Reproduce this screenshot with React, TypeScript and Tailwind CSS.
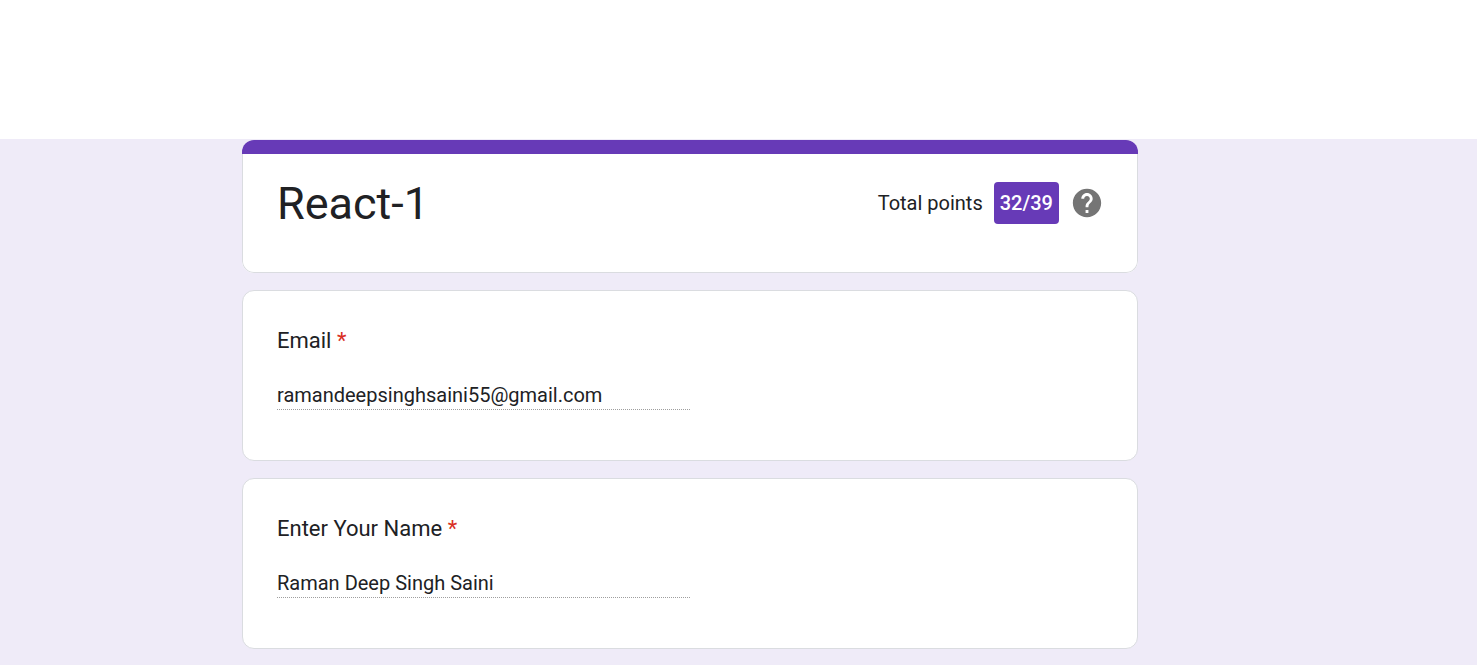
import React from "react";

type FieldCardProps = {
  id: string;
  label: string;
  type: string;
  value: string;
};

function FieldCard({ id, label, type, value }: FieldCardProps) {
  return (
    <section className="rounded-xl border border-[#dadce0] bg-white px-[34px] pt-[33px] pb-[50px]">
      <label htmlFor={id} className="block text-[22px] leading-[34px]">
        {label} <span className="text-[#d93025]">*</span>
      </label>
      <input
        id={id}
        type={type}
        defaultValue={value}
        readOnly
        className="mt-[23px] block h-[29px] w-1/2 border-b border-dotted border-[#9e9e9e] bg-transparent p-0 text-[20px] leading-[28px] outline-none"
      />
    </section>
  );
}

export default function App() {
  return (
    <div className="flex min-h-screen flex-col bg-white font-['Roboto',sans-serif] text-[#202124]">
      <div className="h-[139px] shrink-0" />
      <main className="grow bg-[#efebf8] pt-px pr-[97px] pb-4">
        <div className="mx-auto flex max-w-[896px] flex-col gap-[17px]">
          <header className="overflow-hidden rounded-xl bg-white">
            <div className="h-3.5 bg-[#673ab7]" />
            <div className="flex items-start justify-between rounded-b-xl border border-t-0 border-[#dadce0] pt-[21px] pr-[33px] pb-[39px] pl-[34px]">
              <h1 className="text-[45px] leading-[58px]">React-1</h1>
              <div className="flex h-[56px] items-center">
                <span className="text-[20px] leading-[28px]">Total points</span>
                <span className="ml-[11px] rounded bg-[#673ab7] px-1.5 py-[7px] text-[20px] leading-[28px] font-medium text-white">
                  32/39
                </span>
                <button type="button" aria-label="Help" className="ml-[11px] text-[#757575]">
                  <svg className="size-[34px]" viewBox="0 0 24 24" fill="currentColor" aria-hidden="true">
                    <path d="M12 2C6.48 2 2 6.48 2 12s4.48 10 10 10 10-4.48 10-10S17.52 2 12 2zm1 17h-2v-2h2v2zm2.07-7.75l-.9.92C13.45 12.9 13 13.5 13 15h-2v-.5c0-1.1.45-2.1 1.17-2.83l1.24-1.26c.37-.36.59-.86.59-1.41 0-1.1-.9-2-2-2s-2 .9-2 2H8c0-2.21 1.79-4 4-4s4 1.79 4 4c0 .88-.36 1.68-.93 2.25z" />
                  </svg>
                </button>
              </div>
            </div>
          </header>
          <FieldCard id="email" label="Email" type="email" value="ramandeepsinghsaini55@gmail.com" />
          <FieldCard id="name" label="Enter Your Name" type="text" value="Raman Deep Singh Saini" />
        </div>
      </main>
    </div>
  );
}
